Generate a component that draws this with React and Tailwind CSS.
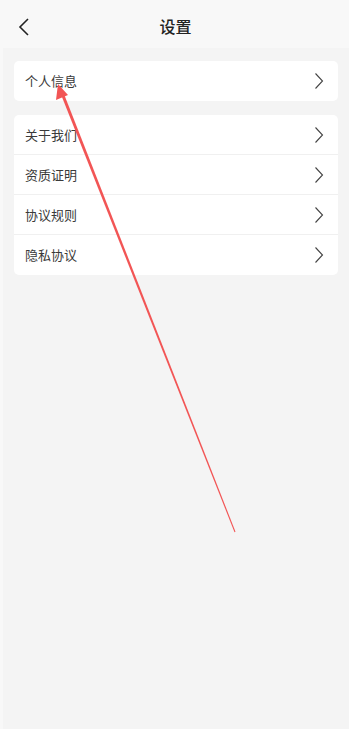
import React from 'react';

const font = { fontFamily: '"Noto Sans CJK SC", "Noto Sans", sans-serif' };

const Chevron = () => (
    <svg width="10" height="18" viewBox="0 0 10 18" fill="none" className="shrink-0">
        <path d="M1.5 1.5 L8.5 9 L1.5 16.5" stroke="#444" strokeWidth="1.1" />
    </svg>
);

const Row = ({ label, last }) => (
    <div className={`flex items-center justify-between h-10 pl-[11px] pr-[14px] ${last ? '' : 'border-b border-[#f0f0f0]'}`}>
        <span className="text-[13px] text-[#3a3a3a]">{label}</span>
        <Chevron />
    </div>
);

const App = () => {
    const groups = [['个人信息'], ['关于我们', '资质证明', '协议规则', '隐私协议']];
    return (
        <div className="relative w-[349px] h-[729px] overflow-hidden bg-[#f8f8f8]" style={font}>
            <div className="relative h-12 flex items-center justify-center">
                <svg className="absolute left-[18px] top-[17px]" width="12" height="20" viewBox="0 0 12 20" fill="none">
                    <path d="M10 2 L2 10 L10 18" stroke="#222" strokeWidth="1.6" />
                </svg>
                <span className="text-[16px] font-medium text-[#222] mt-[4px] ml-[2px]">设置</span>
            </div>
            <div className="ml-[3px] h-[681px] bg-[#f4f4f4] pt-[13px] px-[11px] flex flex-col gap-[14px]">
                {groups.map((g, i) => (
                    <div key={i} className="bg-white rounded-[5px] overflow-hidden">
                        {g.map((label, j) => (
                            <Row key={label} label={label} last={j === g.length - 1} />
                        ))}
                    </div>
                ))}
            </div>
            <svg className="absolute inset-0 pointer-events-none" width="349" height="729" viewBox="0 0 349 729">
                <polygon points="235.5,531.8 234.5,532.2 60.6,93.6 63.4,92.4" fill="#f25555" />
                <polygon points="58,84 56,100 68,95" fill="#f25555" />
            </svg>
        </div>
    );
};

export default App;
